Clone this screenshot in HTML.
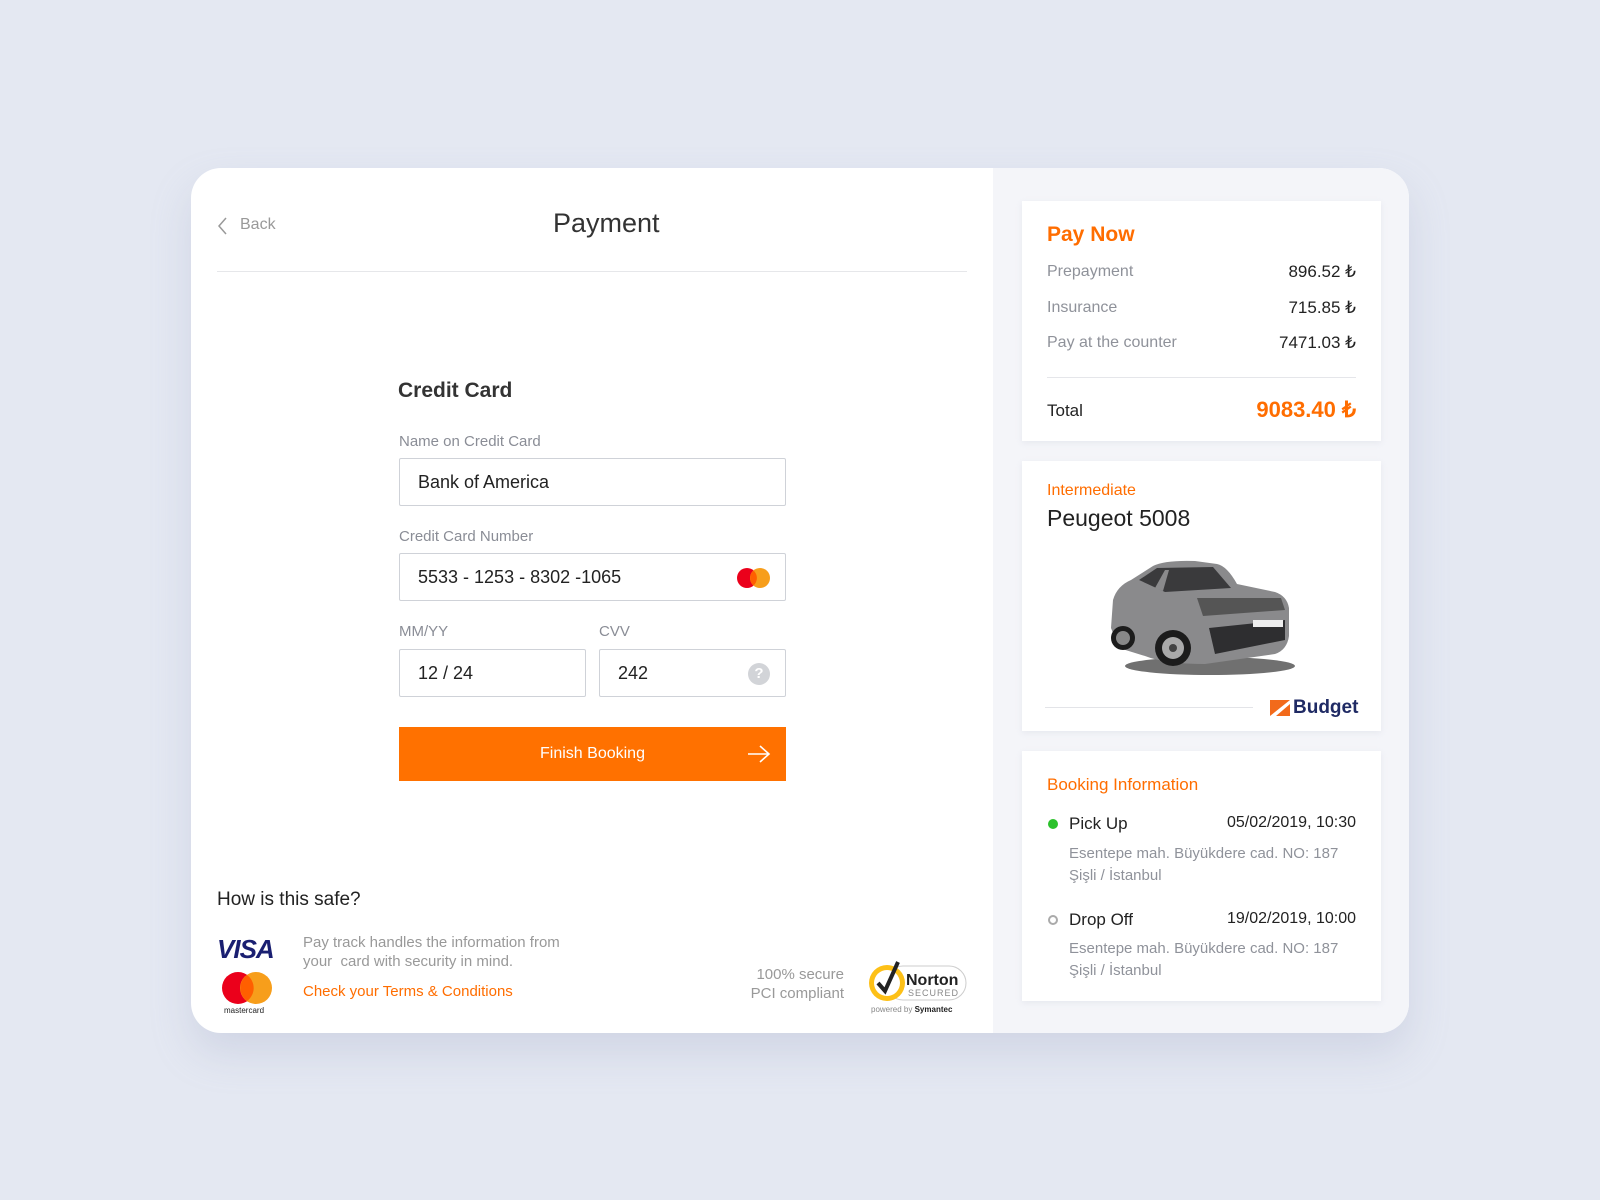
<!DOCTYPE html>
<html><head><meta charset="utf-8"><style>
*{margin:0;padding:0;box-sizing:border-box}
body{width:1600px;height:1200px;background:#e4e8f2;font-family:"Liberation Sans",sans-serif;position:relative;overflow:hidden}
.a{position:absolute;white-space:nowrap}
.card{position:absolute;left:191px;top:168px;width:1218px;height:865px;background:#fff;border-radius:30px;overflow:hidden;box-shadow:0 20px 40px rgba(150,160,190,.25)}
.right{position:absolute;left:993px;top:168px;width:416px;height:865px;background:#f4f5f9;border-radius:0 30px 30px 0}
.box{position:absolute;left:1022px;width:359px;background:#fff;box-shadow:0 2px 6px rgba(180,185,200,.2)}
.lbl{font-size:15px;color:#8a8d96}
.inp{position:absolute;border:1px solid #cfd2d8;border-radius:2px;height:48px;background:#fff;font-size:18px;color:#222;padding-left:18px;line-height:46px}
.g{color:#8f929a;font-size:16px}
.v{color:#222;font-size:17px}
.addr{font-size:15px;color:#8f929a}
</style></head><body>
<div class="card"></div>
<div class="right"></div>

<svg class="a" style="left:217px;top:216px" width="12" height="20"><path d="M9 2 L2 10 L9 18" stroke="#999" stroke-width="1.5" fill="none"/></svg>
<div class="a" style="left:240px;top:216px;font-size:16px;color:#999">Back</div>
<div class="a" style="left:553px;top:208px;font-size:27px;color:#333;">Payment</div>
<div class="a" style="left:217px;top:271px;width:750px;height:1px;background:#e6e7ea"></div>

<div class="a" style="left:398px;top:379px;font-size:21px;color:#333;font-weight:bold">Credit Card</div>
<div class="a lbl" style="left:399px;top:433px">Name on Credit Card</div>
<div class="inp" style="left:399px;top:458px;width:387px">Bank of America</div>
<div class="a lbl" style="left:399px;top:528px">Credit Card Number</div>
<div class="inp" style="left:399px;top:553px;width:387px">5533 - 1253 - 8302 -1065</div>
<svg class="a" style="left:736px;top:567px" width="36" height="22"><circle cx="11" cy="11" r="10" fill="#eb001b"/><circle cx="24" cy="11" r="10" fill="#f79e1b"/><path d="M17.5 3.5 A10 10 0 0 1 17.5 18.5 A10 10 0 0 1 17.5 3.5Z" fill="#ff5f00"/></svg>
<div class="a lbl" style="left:399px;top:623px">MM/YY</div>
<div class="a lbl" style="left:599px;top:623px">CVV</div>
<div class="inp" style="left:399px;top:649px;width:187px">12 / 24</div>
<div class="inp" style="left:599px;top:649px;width:187px">242</div>
<div class="a" style="left:748px;top:663px;width:22px;height:22px;border-radius:50%;background:#d2d4d8;color:#fff;font-size:15px;font-weight:bold;text-align:center;line-height:22px">?</div>
<div class="a" style="left:399px;top:727px;width:387px;height:54px;background:#ff7100;color:#fff;font-size:16px;text-align:center;line-height:54px">Finish Booking</div>
<svg class="a" style="left:747px;top:744px" width="24" height="20"><path d="M1 10 H22 M13 2 L22 10 L13 18" stroke="#fff" stroke-width="1.6" fill="none"/></svg>

<div class="a" style="left:217px;top:889px;font-size:19px;color:#222">How is this safe?</div>
<div class="a" style="left:217px;top:934px;font-size:26px;font-weight:bold;font-style:italic;color:#1a1f71;letter-spacing:-1px">VISA</div>
<svg class="a" style="left:221px;top:971px" width="56" height="44"><circle cx="17" cy="17" r="16" fill="#eb001b"/><circle cx="35" cy="17" r="16" fill="#f79e1b"/><path d="M26 4 A16 16 0 0 1 26 30 A16 16 0 0 1 26 4Z" fill="#ff5f00"/><text x="3" y="42" font-size="8" fill="#222" font-family="Liberation Sans">mastercard</text></svg>
<div class="a" style="left:303px;top:933px;font-size:15px;color:#999;line-height:19px">Pay track handles the information from<br>your&nbsp; card with security in mind.</div>
<div class="a" style="left:303px;top:983px;font-size:15px;color:#ff6d00">Check your Terms &amp; Conditions</div>
<div class="a" style="left:740px;top:965px;font-size:15px;color:#999;text-align:right;line-height:19px;width:104px">100% secure<br>PCI compliant</div>
<svg class="a" style="left:866px;top:958px" width="102" height="58"><rect x="20" y="8" width="80" height="34" rx="17" fill="#fff" stroke="#ccc"/><circle cx="21" cy="25" r="18" fill="#fdc017"/><circle cx="21" cy="25" r="13" fill="#fff"/><path d="M12 25 L19 33 L32 4" stroke="#222" stroke-width="4" fill="none"/><text x="40" y="27" font-size="16" font-weight="bold" fill="#222" font-family="Liberation Sans">Norton</text><text x="42" y="38" font-size="9" fill="#888" font-family="Liberation Sans" letter-spacing="1">SECURED</text><text x="5" y="54" font-size="8" fill="#888" font-family="Liberation Sans">powered by <tspan font-weight="bold" fill="#222">Symantec</tspan></text></svg>

<div class="box" style="top:201px;height:240px"></div>
<div class="a" style="left:1047px;top:223px;font-size:21px;color:#ff6d00;font-weight:bold">Pay Now</div>
<div class="a g" style="left:1047px;top:263px">Prepayment</div><div class="a v" style="right:244px;top:262px">896.52 ₺</div>
<div class="a g" style="left:1047px;top:299px">Insurance</div><div class="a v" style="right:244px;top:298px">715.85 ₺</div>
<div class="a g" style="left:1047px;top:334px">Pay at the counter</div><div class="a v" style="right:244px;top:333px">7471.03 ₺</div>
<div class="a" style="left:1047px;top:377px;width:309px;height:1px;background:#e5e6ea"></div>
<div class="a v" style="left:1047px;top:401px">Total</div>
<div class="a" style="right:244px;top:397px;font-size:22px;color:#ff6d00;font-weight:bold">9083.40 ₺</div>

<div class="box" style="top:461px;height:270px"></div>
<div class="a" style="left:1047px;top:482px;font-size:16px;color:#ff6d00">Intermediate</div>
<div class="a" style="left:1047px;top:505px;font-size:23px;color:#222">Peugeot 5008</div>
<svg class="a" style="left:1105px;top:558px" width="195" height="124">
<ellipse cx="105" cy="108" rx="85" ry="9" fill="#111" opacity=".6"/>
<path d="M6 70 L8 42 Q12 28 26 22 L48 8 Q60 2 90 3 L112 6 Q122 8 132 26 L170 34 Q182 38 184 50 L184 78 Q182 92 170 96 L100 106 Q60 106 40 98 L14 90 Z" fill="#8a8a8c"/>
<path d="M34 22 L52 10 L108 9 L126 30 L60 34 Z" fill="#3a3a3c"/>
<path d="M50 30 L60 12 L64 12 L58 33Z" fill="#8a8a8c"/>
<path d="M92 40 L176 40 L180 52 L98 58Z" fill="#555"/>
<path d="M104 70 L180 62 L180 82 L110 96Z" fill="#2e2e30"/>
<rect x="148" y="62" width="30" height="7" fill="#eee"/>
<circle cx="68" cy="90" r="18" fill="#1c1c1c"/><circle cx="68" cy="90" r="11" fill="#aaa"/><circle cx="68" cy="90" r="4" fill="#444"/>
<circle cx="18" cy="80" r="12" fill="#1c1c1c"/><circle cx="18" cy="80" r="7" fill="#888"/>
</svg>
<div class="a" style="left:1045px;top:707px;width:208px;height:1px;background:#e3e4e8"></div>
<svg class="a" style="left:1270px;top:700px" width="20" height="16"><path d="M0 0 H20 L0 16Z" fill="#f26a1b"/><path d="M20 4 V16 H6Z" fill="#f26a1b"/></svg>
<div class="a" style="left:1293px;top:697px;font-size:19px;font-weight:bold;color:#1f2a64">Budget</div>

<div class="box" style="top:751px;height:250px"></div>
<div class="a" style="left:1047px;top:775px;font-size:17px;color:#ff6d00">Booking Information</div>
<div class="a" style="left:1048px;top:819px;width:10px;height:10px;border-radius:50%;background:#2bc12b"></div>
<div class="a v" style="left:1069px;top:814px">Pick Up</div>
<div class="a v" style="right:244px;top:814px;font-size:16px">05/02/2019, 10:30</div>
<div class="a addr" style="left:1069px;top:843px;line-height:22px">Esentepe mah. Büyükdere cad. NO: 187<br>Şişli / İstanbul</div>
<div class="a" style="left:1048px;top:915px;width:10px;height:10px;border-radius:50%;border:2px solid #aaa"></div>
<div class="a v" style="left:1069px;top:910px">Drop Off</div>
<div class="a v" style="right:244px;top:910px;font-size:16px">19/02/2019, 10:00</div>
<div class="a addr" style="left:1069px;top:938px;line-height:22px">Esentepe mah. Büyükdere cad. NO: 187<br>Şişli / İstanbul</div>
</body></html>
